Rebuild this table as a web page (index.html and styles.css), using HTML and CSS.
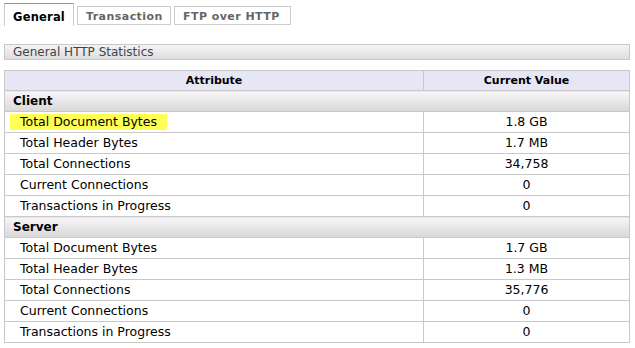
FILE: index.html
```html
<!DOCTYPE html>
<html>
<head>
<meta charset="utf-8">
<link rel="stylesheet" href="styles.css">
</head>
<body>
<div class="tabs">
  <div class="tab active">General</div>
  <div class="tab">Transaction</div>
  <div class="tab">FTP over HTTP</div>
</div>
<div class="section">General HTTP Statistics</div>
<table class="stats">
  <thead>
    <tr><th class="attr">Attribute</th><th class="val">Current Value</th></tr>
  </thead>
  <tbody>
    <tr class="group"><td colspan="2">Client</td></tr>
    <tr><td class="name"><span class="hl">Total Document Bytes</span></td><td class="num">1.8 GB</td></tr>
    <tr><td class="name">Total Header Bytes</td><td class="num">1.7 MB</td></tr>
    <tr><td class="name">Total Connections</td><td class="num">34,758</td></tr>
    <tr><td class="name">Current Connections</td><td class="num">0</td></tr>
    <tr><td class="name">Transactions in Progress</td><td class="num">0</td></tr>
    <tr class="group"><td colspan="2">Server</td></tr>
    <tr><td class="name">Total Document Bytes</td><td class="num">1.7 GB</td></tr>
    <tr><td class="name">Total Header Bytes</td><td class="num">1.3 MB</td></tr>
    <tr><td class="name">Total Connections</td><td class="num">35,776</td></tr>
    <tr><td class="name">Current Connections</td><td class="num">0</td></tr>
    <tr><td class="name">Transactions in Progress</td><td class="num">0</td></tr>
  </tbody>
</table>
</body>
</html>
```
FILE: styles.css
```css
html, body {
  margin: 0;
  padding: 0;
  background: #fff;
}
body {
  font-family: "DejaVu Sans", Verdana, sans-serif;
  font-size: 12.5px;
  color: #000;
}
.tabs {
  display: flex;
  align-items: flex-start;
  padding: 3px 0 0 4px;
  gap: 3px;
  height: 22px;
}
.tab {
  box-sizing: border-box;
  height: 19px;
  margin-top: 3px;
  border: 1px solid #cccccc;
  color: #666;
  font-weight: bold;
  font-size: 11px;
  padding: 3px 8px 0 8px;
  line-height: 14px;
  letter-spacing: 0.45px;
}
.tab:nth-child(2) { width: 94px; }
.tab:nth-child(3) { width: 117px; }
.tab.active {
  width: 70px;
  height: 23px;
  margin-top: 0;
  border-top: 1px solid #e8734a;
  border-bottom: none;
  color: #000;
  padding-top: 6px;
  font-size: 11.5px;
  letter-spacing: 0.2px;
}
.section {
  box-sizing: border-box;
  margin: 19px 5px 0 4px;
  height: 16px;
  border: 1px solid #c8c8c8;
  background: linear-gradient(#f6f3f6, #dedede);
  color: #444;
  padding-left: 8px;
  line-height: 14px;
  font-size: 12px;
}
.stats {
  margin: 10px 5px 0 4px;
  width: 626px;
  border-collapse: collapse;
  border: 1px solid #c8c8c8;
}
.stats th, .stats td {
  border: 1px solid #c8c8c8;
  padding: 0;
  height: 20px;
  line-height: 20px;
}
.stats th {
  background: #e6e6f4;
  font-weight: bold;
  font-size: 11px;
  text-align: center;
  height: 19px;
  line-height: 18px;
}
.stats th.attr { width: 418px; }
.group td {
  background: linear-gradient(#f8f5f8, #d8d8d8);
  font-weight: bold;
  padding-left: 8px;
  font-size: 12px;
}
.name {
  padding-left: 15px !important;
}
.num {
  text-align: center;
}
.hl {
  background: #ffff55;
  display: inline-block;
  margin-left: -10px;
  padding: 0 10px 0 10px;
  line-height: 16px;
}
```
